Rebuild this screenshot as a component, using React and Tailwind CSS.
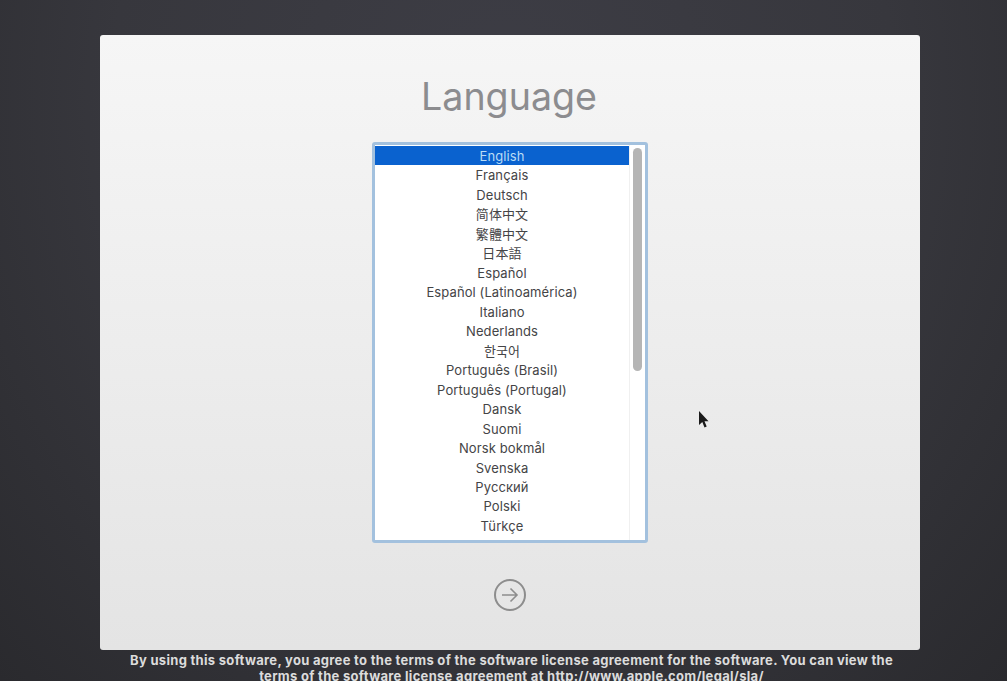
import React from "react";

const languages = [
  "English",
  "Français",
  "Deutsch",
  "简体中文",
  "繁體中文",
  "日本語",
  "Español",
  "Español (Latinoamérica)",
  "Italiano",
  "Nederlands",
  "한국어",
  "Português (Brasil)",
  "Português (Portugal)",
  "Dansk",
  "Suomi",
  "Norsk bokmål",
  "Svenska",
  "Русский",
  "Polski",
  "Türkçe",
];

const App = () => {
  return (
    <div className="relative h-[681px] w-[1007px] overflow-hidden bg-[radial-gradient(ellipse_at_50%_15%,#3d3d45_0%,#37373d_55%,#2a2a2e_100%)] font-['Inter','Liberation_Sans','Noto_Sans_CJK_SC',sans-serif]">
      <div className="flex flex-col items-center pt-[35px] pl-[13px]">
        <div className="flex h-[615px] w-[820px] flex-col items-center rounded-[3px] bg-gradient-to-b from-[#f6f6f6] to-[#e4e4e4] pt-[33px]">
          <h1 className="h-[58px] pr-[2px] text-[37.6px] leading-[57px] font-normal text-[#8c8c8f]">Language</h1>

          <div className="mt-[16px] flex h-[401px] w-[276px] rounded-[3px] border-[3px] border-[#a3c1de] bg-white">
            <ul className="flex w-[254px] flex-col pt-[1px]">
              {languages.map((lang, i) => (
                <li
                  key={lang}
                  className={`h-[19.47px] text-center text-[13px] leading-[21.5px] tracking-[0.1px] ${
                    i === 0 ? "bg-[#0a62cf] text-[#b9dcf5]" : "text-[#444446]"
                  }`}
                >
                  {lang}
                </li>
              ))}
            </ul>
            <div className="flex flex-1 justify-center border-l border-[#f0f0f0] pt-[3px]">
              <div className="h-[223px] w-[9px] rounded-full bg-[#b5b5b5]" />
            </div>
          </div>

          <div className="mt-[36px] flex h-[32px] w-[32px] items-center justify-center rounded-full border-2 border-[#8d8d8d]">
            <svg width="20" height="20" viewBox="0 0 20 20" fill="none" stroke="#8d8d8d" strokeWidth="1.6">
              <path d="M2 10h15M10.5 3.5 17 10l-6.5 6.5" />
            </svg>
          </div>
        </div>

        <p className="mt-[2px] ml-[3px] w-[780px] text-center text-[13px] leading-[16px] font-bold tracking-[0.3px] text-[#dcdcdc]">
          By using this software, you agree to the terms of the software license agreement for the software. You can view the terms of the software license agreement at http://www.apple.com/legal/sla/
        </p>
      </div>

      {/* mouse pointer */}
      <svg className="absolute left-[698px] top-[410px]" width="12" height="20" viewBox="0 0 12 20">
        <path d="M1 1v14l3.3-3 2.2 5.5 2.2-1-2.2-5.2H10.5z" fill="#1a1a1a" />
      </svg>
    </div>
  );
};

export default App;
